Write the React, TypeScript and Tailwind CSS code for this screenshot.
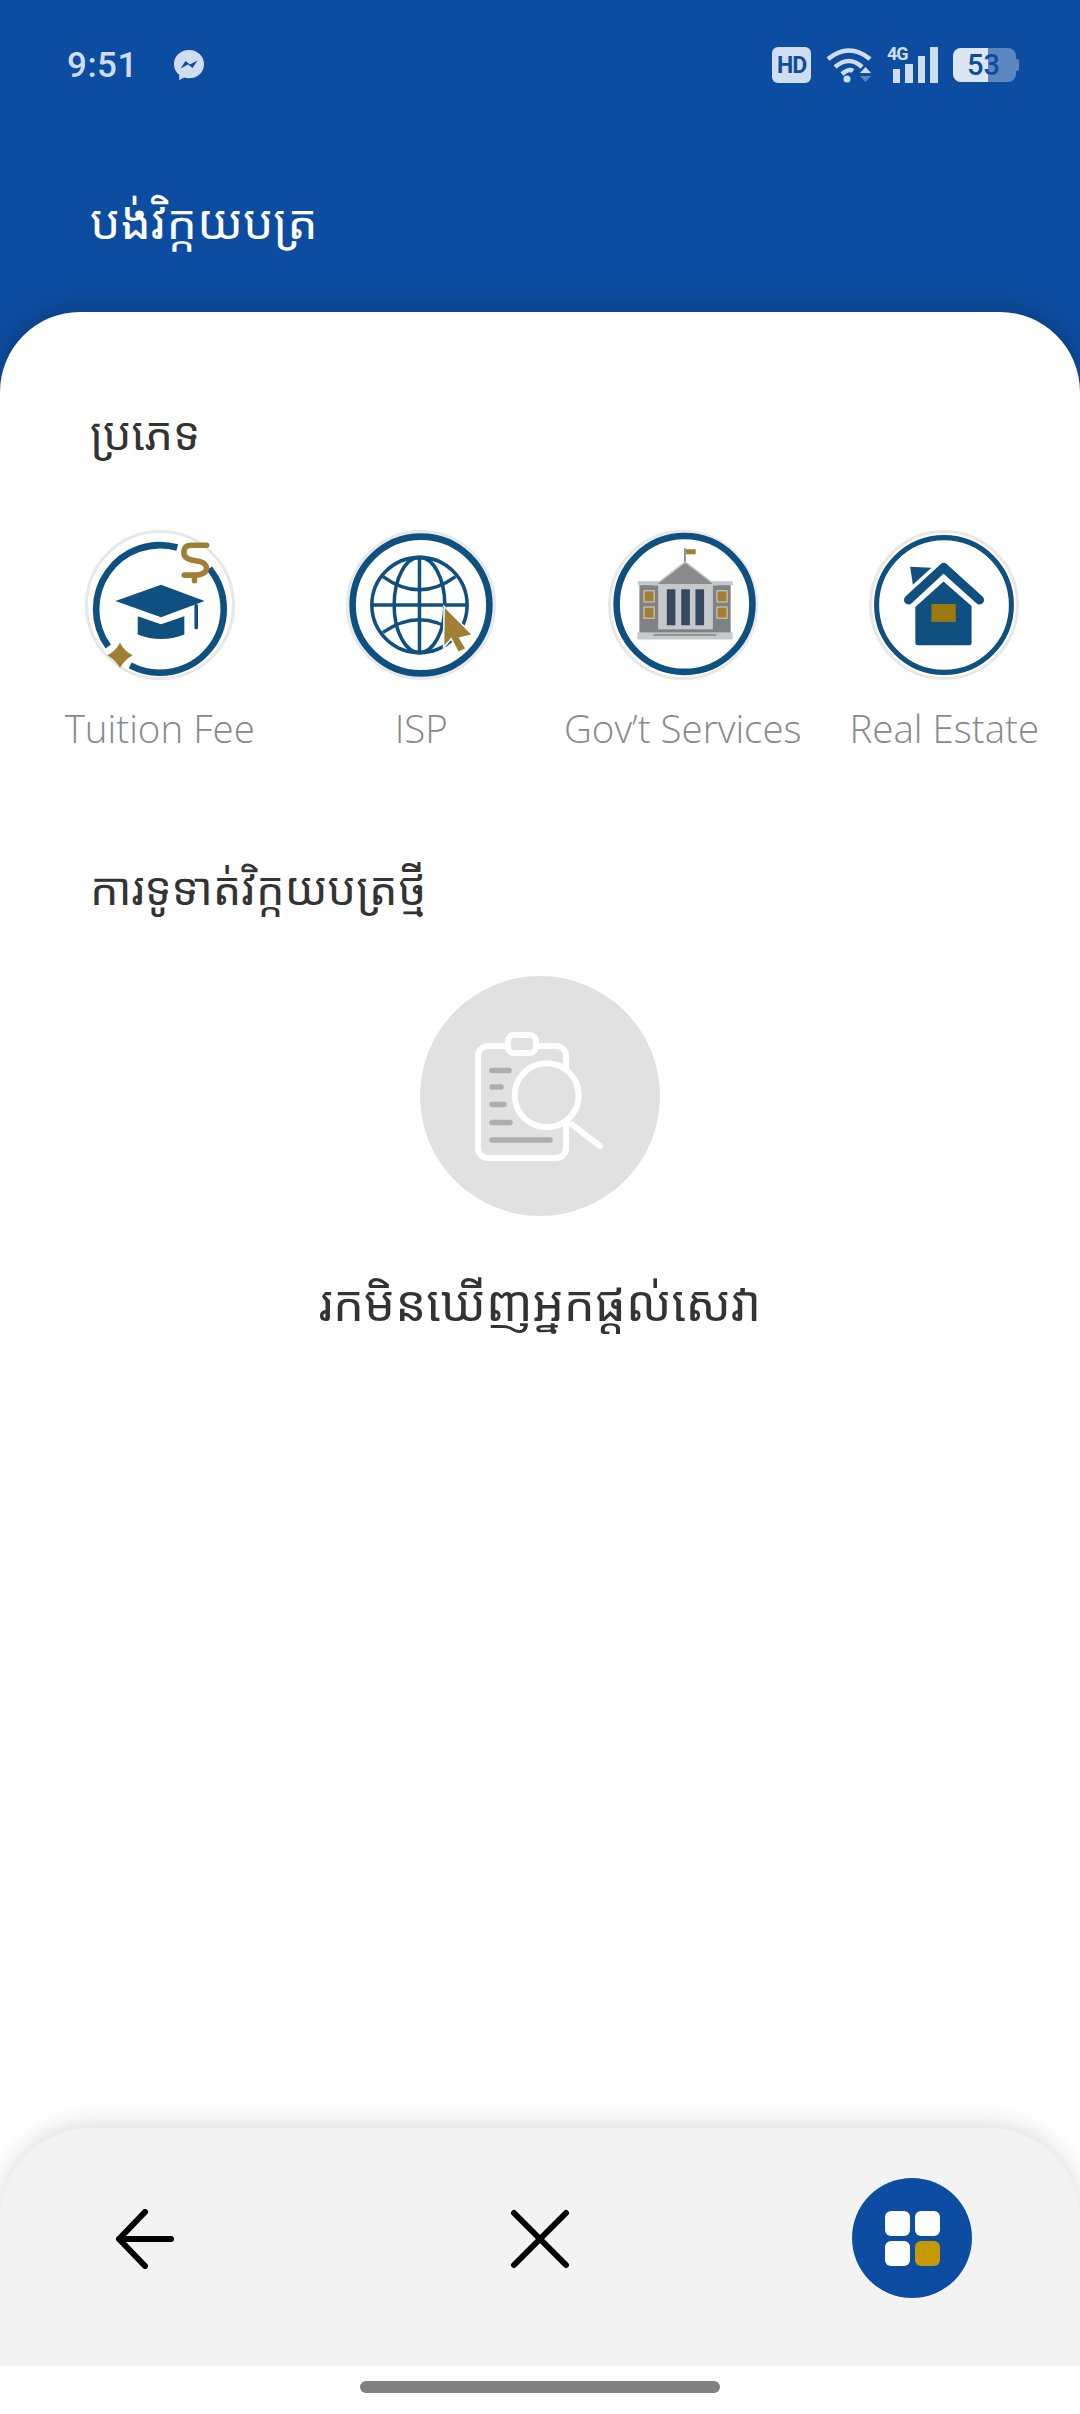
const gold = '#a07f35';
const navy = '#0f5080';

function TuitionIcon() {
  return (
    <svg viewBox="0 0 148 148" className="w-[150px] h-[150px]">
      <circle cx="74" cy="74" r="72.5" fill="#fff" stroke="#e8e8e8" strokeWidth="3" />
      <path d="M91 17.300A63 63 0 0 0 23 115" fill="none" stroke={navy} strokeWidth="6.5" />
      <path d="M44.600 133.600A63 63 0 0 0 122.700 38" fill="none" stroke={navy} strokeWidth="6.5" />
      <path d="M34.500 111Q38 119 47 123.500Q39 128 34.500 136Q30 128 22 123.500Q31 119 34.500 111Z" fill={gold} />
      {/* dollar sign of the logo */}
      <path d="M120 15H105Q97.500 15 97.500 22Q97.500 28 105 29.500L113 31Q120 33 120 38Q119 44 110 44.500H98M108 44.500V50" fill="none" stroke={gold} strokeWidth="5.500" strokeLinecap="round" />
      <path d="M30 70L75 54L118 70L75 86Z" fill={navy} />
      <path d="M52 85L75 93L98 85V103Q75 112 52 103Z" fill={navy} />
      <rect x="108" y="73" width="3.500" height="25" rx="1.500" fill={navy} />
    </svg>
  );
}

function IspIcon() {
  return (
    <svg viewBox="0 0 148 148" className="w-[150px] h-[150px]">
      <circle cx="74" cy="74" r="72.500" fill="#fff" stroke="#e8e8e8" strokeWidth="3" />
      <circle cx="74" cy="74" r="67.500" fill="none" stroke={navy} strokeWidth="6.500" />
      <g fill="none" stroke={navy} strokeWidth="3.500">
        <circle cx="72.500" cy="74" r="47" />
        <ellipse cx="72.500" cy="74" rx="25" ry="47" />
        <path d="M72.500 27V121M25.500 74H119.500" />
        <path d="M36.500 46Q72.500 72 108 46M36.500 101Q72.500 76 108 101" />
      </g>
      <path d="M97.500 77L123.500 103L111 106L117.500 117L111 120L104 106L97 114Z" fill={gold} stroke="#fff" strokeWidth="3" paintOrder="stroke" />
    </svg>
  );
}

function GovIcon() {
  return (
    <svg viewBox="0 0 148 148" className="w-[150px] h-[150px]">
      <circle cx="74" cy="74" r="72.500" fill="#fff" stroke="#e8e8e8" strokeWidth="3" />
      <circle cx="75.500" cy="73" r="67" fill="none" stroke={navy} strokeWidth="6.500" />
      <rect x="75" y="18" width="1.800" height="14" fill="#8a8b8d" />
      <rect x="77" y="19" width="9.500" height="5" fill={gold} />
      <rect x="31" y="54" width="90" height="48" fill="#808184" />
      <rect x="29.500" y="50.500" width="93.500" height="4" fill="#c5c9cc" />
      <path d="M76.300 31.500L47 54H105.500Z" fill="#8a8b8d" stroke="#c5c9cc" strokeWidth="1.500" />
      <rect x="49.500" y="54" width="54" height="44" fill="#c5c9cc" />
      <rect x="58" y="58.500" width="8.500" height="35.500" fill="#34495e" />
      <rect x="72.300" y="58.500" width="8.500" height="35.500" fill="#34495e" />
      <rect x="86.300" y="58.500" width="8.500" height="35.500" fill="#34495e" />
      <g fill={gold} stroke="#d8d4bc" strokeWidth="1">
        <rect x="35.500" y="60" width="10" height="11" />
        <rect x="35.500" y="76" width="10" height="11" />
        <rect x="107.500" y="60" width="10" height="11" />
        <rect x="107.500" y="76" width="10" height="11" />
      </g>
      <rect x="29" y="101" width="94" height="7" fill="#c5c9cc" />
      <rect x="45" y="102.500" width="62" height="2" fill="#8f9396" />
    </svg>
  );
}

function HouseIcon() {
  return (
    <svg viewBox="0 0 148 148" className="w-[150px] h-[150px]">
      <circle cx="74" cy="74" r="72.500" fill="#fff" stroke="#e8e8e8" strokeWidth="3" />
      <circle cx="74" cy="74" r="66.500" fill="none" stroke={navy} strokeWidth="5" />
      <path d="M40.600 36.300L61.600 37.300L43.300 54Z" fill={navy} />
      <path d="M39 69L73.600 37L109 69" fill="none" stroke={navy} strokeWidth="9" strokeLinecap="round" strokeLinejoin="round" />
      <path d="M73.600 50.700L101.200 75V111.500Q101.200 113.700 99 113.700H48Q45.700 113.700 45.700 111.500V76Z" fill={navy} />
      <rect x="61.600" y="73" width="24" height="17.700" fill="#9a7b0a" />
    </svg>
  );
}

function EmptyIcon() {
  return (
    <svg viewBox="0 0 240 240" className="w-[240px] h-[240px]">
      <circle cx="120" cy="120" r="120" fill="#e1e1e1" />
      <rect x="58" y="70" width="88" height="112" rx="10" fill="none" stroke="#fff" strokeWidth="6" />
      <rect x="88" y="59" width="28" height="18" rx="6" fill="#e1e1e1" stroke="#fff" strokeWidth="6" />
      <g stroke="#aeaeae" strokeWidth="5.500" strokeLinecap="round">
        <path d="M72 94.500H89" />
        <path d="M72 111H81" />
        <path d="M72 128.500H84" />
        <path d="M72 146.500H90" />
        <path d="M72 164H130" />
      </g>
      <path d="M151.700 148.300L180 170" stroke="#fff" strokeWidth="6" strokeLinecap="round" />
      <circle cx="126.700" cy="119.300" r="32" fill="#e1e1e1" stroke="#fff" strokeWidth="6" />
    </svg>
  );
}

function StatusIcons() {
  return (
    <div className="flex items-center text-[#d0ddf0]">
      <div className="w-[39px] h-[36px] rounded-[6px] bg-[#d0ddf0] text-[#0d4da1] flex items-center justify-center text-[23px] font-bold leading-none tracking-[-1px]">
        HD
      </div>
      <svg viewBox="0 0 46 36" className="w-[46px] h-[36px] ml-[15px]" fill="none" stroke="#d0ddf0" strokeWidth="4.500">
        <path d="M2 12Q23 -5 44 12" />
        <path d="M9 20Q23 8 36 20" />
        <path d="M16 27Q23 21 27 24" />
        <circle cx="21" cy="32" r="3.500" fill="#d0ddf0" stroke="none" />
        <path d="M34 26L39.500 20L45 26Z" fill="#d0ddf0" stroke="none" />
        <path d="M34 29L39.500 35L45 29Z" fill="#5c86c0" stroke="none" />
      </svg>
      <div className="relative w-[52px] h-[36px] ml-[15px]">
        <span className="absolute left-0 top-[-3px] text-[18px] font-bold leading-[20px] tracking-[-1px]">4G</span>
        <div className="absolute left-[6px] bottom-0 flex items-end gap-[5px]">
          <div className="w-[7px] h-[14px] bg-[#d0ddf0]" />
          <div className="w-[8px] h-[19px] bg-[#d0ddf0]" />
          <div className="w-[7px] h-[27px] bg-[#d0ddf0]" />
          <div className="w-[8px] h-[36px] bg-[#d0ddf0]" />
        </div>
      </div>
      <div className="relative w-[66px] h-[34px] ml-[14px]">
        <div className="absolute inset-y-0 left-0 w-[63px] rounded-[8px] bg-[#5c86c0]" />
        <div className="absolute inset-y-0 left-0 w-[35px] rounded-l-[8px] bg-[#dbe5f4]" />
        <div className="absolute right-0 top-[11px] w-[3px] h-[12px] rounded-r-[2px] bg-[#5c86c0]" />
        <span className="absolute left-[14px] top-0 text-[29px] leading-[34px] font-medium text-[#0d4da1]">53</span>
      </div>
    </div>
  );
}

export default function App() {
  const categories = [
    { label: 'Tuition Fee', icon: <TuitionIcon /> },
    { label: 'ISP', icon: <IspIcon /> },
    { label: 'Gov’t Services', icon: <GovIcon /> },
    { label: 'Real Estate', icon: <HouseIcon /> },
  ];

  return (
    <div className="w-[1080px] h-[2414px] flex flex-col bg-white overflow-hidden font-['Roboto','Noto_Sans',sans-serif]">
      {/* Header */}
      <div className="h-[392px] shrink-0 bg-[#0d4da1] text-white">
        <div className="h-[130px] flex items-center justify-between pl-[67px] pr-[61px]">
          <div className="flex items-center gap-[35px] text-[#d0ddf0]">
            <span className="text-[35px] font-medium leading-none tracking-[0.5px]">9:51</span>
            <svg viewBox="0 0 32 32" className="w-[32px] h-[32px]">
              <path d="M16 1C7.500 1 1 7.200 1 15.200C1 19.600 3 23.300 6.200 25.800V31L11.100 28.500C12.700 29 14.300 29.300 16 29.300C24.500 29.300 31 23.200 31 15.200C31 7.200 24.500 1 16 1Z" fill="#d0ddf0" />
              <path d="M7.500 19.500L12.500 12L17 15.500L24.500 11.500L19.500 19L15 15.500Z" fill="#0d4da1" />
            </svg>
          </div>
          <StatusIcons />
        </div>
        <div className="pl-[90px] pt-[56px] text-[48px] leading-[70px] font-['Noto_Sans_Khmer','Noto_Sans',sans-serif]">បង់វិក្កយបត្រ</div>
      </div>

      {/* Sheet */}
      <div className="relative -mt-[80px] flex-1 flex flex-col rounded-t-[80px] bg-white shadow-[0_-6px_30px_rgba(0,0,0,0.2)]">
        <div className="pl-[90px] pt-[88px] text-[45px] leading-[66px] text-[#333] font-['Noto_Sans_Khmer','Noto_Sans',sans-serif]">ប្រភេទ</div>

        <div className="grid grid-cols-4 pl-[29px] pr-[5px] mt-[64px]">
          {categories.map((c) => (
            <div key={c.label} className="flex flex-col items-center">
              {c.icon}
              <div className="mt-[25px] text-[38.5px] leading-[46px] font-light text-[#88898c] whitespace-nowrap font-['Open_Sans',sans-serif]">{c.label}</div>
            </div>
          ))}
        </div>

        <div className="pl-[90px] mt-[104px] text-[45px] leading-[66px] text-[#333] font-['Noto_Sans_Khmer','Noto_Sans',sans-serif]">ការទូទាត់វិក្កយបត្រថ្មី</div>

        <div className="flex flex-col items-center mt-[55px]">
          <EmptyIcon />
          <div className="mt-[51px] text-[49px] leading-[70px] text-[#333] font-['Noto_Sans_Khmer','Noto_Sans',sans-serif]">រកមិនឃើញអ្នកផ្តល់សេវា</div>
        </div>

        {/* Bottom bar */}
        <div className="mt-auto h-[238px] shrink-0 flex items-start justify-between rounded-t-[90px] bg-[#f3f3f3] shadow-[0_-4px_24px_rgba(0,0,0,0.14)] pt-[50px] pl-[114px] pr-[108px]">
          <svg viewBox="0 0 60 60" className="w-[60px] h-[60px] mt-[31px]" fill="none" stroke="#000" strokeWidth="6" strokeLinecap="round" strokeLinejoin="round">
            <path d="M31 3L5 30L31 57M5 30H57" />
          </svg>
          <svg viewBox="0 0 60 60" className="w-[60px] h-[60px] mt-[31px] ml-[53px]" fill="none" stroke="#000" strokeWidth="6" strokeLinecap="round">
            <path d="M4 4L56 56M56 4L4 56" />
          </svg>
          <div className="w-[120px] h-[120px] rounded-full bg-[#0d4da1] grid grid-cols-[25px_25px] gap-[5px] content-center justify-center">
            <div className="w-[25px] h-[25px] rounded-[6px] bg-white" />
            <div className="w-[25px] h-[25px] rounded-[6px] bg-white" />
            <div className="w-[25px] h-[25px] rounded-[6px] bg-white" />
            <div className="w-[25px] h-[25px] rounded-[6px] bg-[#c49b07]" />
          </div>
        </div>

        {/* Home indicator */}
        <div className="h-[48px] shrink-0 bg-white flex justify-center pt-[15px]">
          <div className="w-[360px] h-[12px] rounded-full bg-[#808080]" />
        </div>
      </div>
    </div>
  );
}
